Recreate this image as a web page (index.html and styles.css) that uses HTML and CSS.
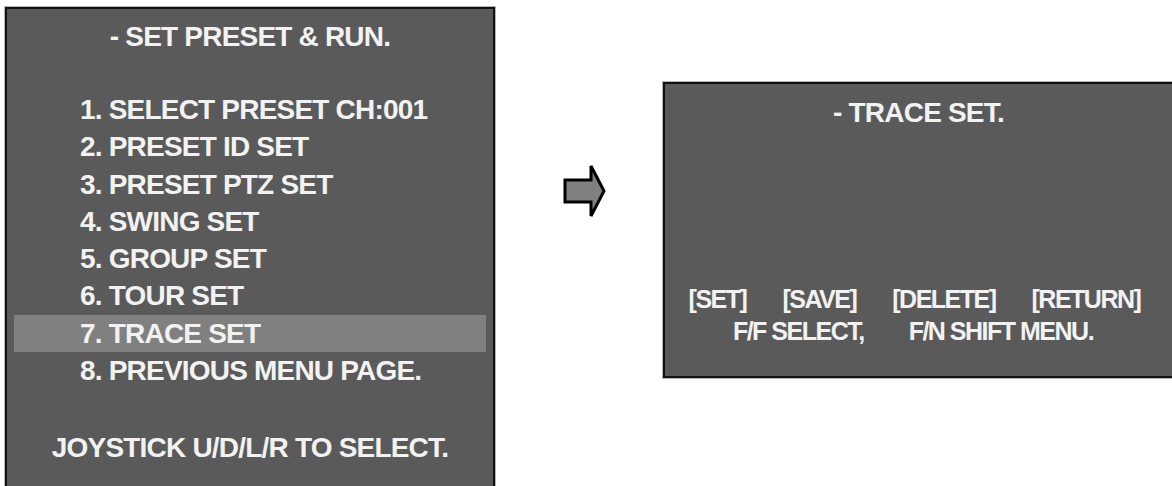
FILE: index.html
```html
<!DOCTYPE html>
<html lang="en">
<head>
    <meta charset="UTF-8">
    <title>Preset &amp; Trace Set</title>
    <link rel="stylesheet" href="styles.css">
</head>
<body>
    <div class="page">
        <!-- Left screen: preset menu -->
        <div class="screen menu">
            <div class="title">- SET PRESET &amp; RUN.</div>
            <ul class="items">
                <li>1. SELECT PRESET CH:001</li>
                <li>2. PRESET ID SET</li>
                <li>3. PRESET PTZ SET</li>
                <li>4. SWING SET</li>
                <li>5. GROUP SET</li>
                <li>6. TOUR SET</li>
                <li class="active">7. TRACE SET</li>
                <li>8. PREVIOUS MENU PAGE.</li>
            </ul>
            <div class="hint">JOYSTICK U/D/L/R TO SELECT.</div>
        </div>

        <!-- Arrow between screens -->
        <div class="arrow">
            <svg width="44" height="56" viewBox="0 0 44 56">
                <path d="M2 16 H28 V2 L41 27 L28 52 V38 H2 Z" fill="#808080" stroke="#000" stroke-width="3"/>
            </svg>
        </div>

        <!-- Right screen: trace set -->
        <div class="screen trace">
            <div class="title">- TRACE SET.</div>
            <div class="keys">
                <span>[SET]</span>
                <span>[SAVE]</span>
                <span>[DELETE]</span>
                <span>[RETURN]</span>
            </div>
            <div class="help">F/F SELECT,<span class="gap"></span>F/N SHIFT MENU.</div>
        </div>
    </div>
</body>
</html>
```

FILE: styles.css
```css
/* Basic Reset */
body {
    margin: 0;
    padding: 0;
    background-color: #fff;
    font-family: "Liberation Sans", Arial, sans-serif;
    font-weight: bold;
    color: #f2f2f2;
    overflow: hidden;
}

.page {
    display: flex;
    align-items: flex-start;
}

/* OSD screen boxes */
.screen {
    flex-shrink: 0;
    background-color: #5a5a5a;
    border: 2px solid #111;
    box-shadow: 0 0 0 1px #b5b5b5;
    font-size: 28px;
    line-height: 37px;
    letter-spacing: -0.8px;
}

.menu {
    margin: 7px 0 0 5px;
    width: 486px;
    height: 470px;
    padding-top: 9px;
}

.menu .title {
    text-align: center;
    margin-bottom: 36px;
}

.items {
    list-style: none;
    margin: 0;
    padding: 0;
    line-height: 37.3px;
}

.items li {
    padding-left: 66px;
    margin: 0 7px;
}

.items li.active {
    background-color: #808080;
}

.menu .hint {
    text-align: center;
    margin-top: 40px;
}

/* Arrow */
.arrow {
    flex-shrink: 0;
    margin: 164px 0 0 68px;
    width: 44px;
}

.trace {
    margin: 82px 0 0 56px;
    flex: 1;
    height: 282px;
    padding-top: 10px;
    border-right: none;
    text-align: center;
}

.trace .keys,
.trace .help {
    font-size: 25px;
    letter-spacing: -1.5px;
    line-height: 32px;
}

.trace .keys {
    margin-top: 152px;
    display: flex;
    justify-content: center;
    gap: 36px;
    padding-right: 8px;
}

.trace .help {
    padding-right: 11px;
}

.help .gap {
    display: inline-block;
    width: 45px;
}
```
